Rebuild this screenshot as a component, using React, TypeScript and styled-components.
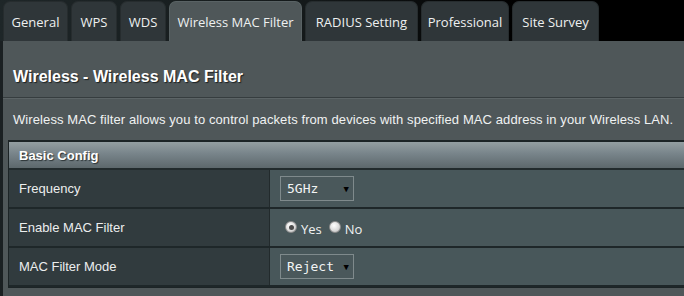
import React from "react";
import styled, { createGlobalStyle } from "styled-components";

const Global = createGlobalStyle`
  html, body { margin: 0; padding: 0; background: #000; overflow: hidden; }
  body { width: 684px; height: 296px; }
`;

const Page = styled.div`
  width: 684px;
  height: 296px;
  display: flex;
  flex-direction: column;
  background: #000;
  overflow: hidden;
`;

const TabBar = styled.div`
  height: 41px;
  display: flex;
  align-items: flex-end;
  gap: 3px;
  padding-left: 3px;
  background: linear-gradient(to right, #1e2628 0%, #14191a 45%, #000 75%);
  flex-shrink: 0;
`;

const Tab = styled.div<{ $w: number; $active?: boolean }>`
  width: ${(p) => p.$w}px;
  height: 40px;
  box-sizing: border-box;
  border-radius: 7px 7px 0 0;
  background: ${(p) => (p.$active ? "#4f5759" : "#2f3639")};
  border: 1px solid ${(p) => (p.$active ? "#596264" : "#262c2e")};
  border-bottom: none;
  display: flex;
  align-items: center;
  justify-content: center;
  font-family: "Open Sans", "DejaVu Sans", sans-serif;
  font-size: 13px;
  color: #eef0f0;
  white-space: nowrap;
  padding-top: 1px;
`;

const Panel = styled.div`
  flex: 1;
  display: flex;
  flex-direction: column;
  background: #4f5759;
  border-left: 3px solid #1a2022;
  margin-right: -20px;
`;

const Title = styled.div`
  height: 56px;
  display: flex;
  align-items: center;
  padding-left: 10px;
  padding-top: 16px;
  box-sizing: border-box;
  font-family: "Liberation Sans", Arial, sans-serif;
  font-weight: bold;
  font-size: 16px;
  color: #ffffff;
  text-shadow: 1px 1px 1px #1b2022;
`;

const Rule = styled.div`
  height: 1px;
  background: #363d3f;
  border-bottom: 1px solid #5c6466;
`;

const Description = styled.div`
  height: 41px;
  display: flex;
  align-items: center;
  padding-left: 10px;
  padding-bottom: 1px;
  box-sizing: border-box;
  font-family: "Liberation Sans", Arial, sans-serif;
  font-size: 13px;
  letter-spacing: 0.09px;
  color: #f0f2f2;
  white-space: nowrap;
`;

const Table = styled.div`
  margin-left: 5px;
  border: 1px solid #1c2426;
  border-right: none;
  border-top: 2px solid #1c2426;
  display: flex;
  flex-direction: column;
`;

const Header = styled.div`
  height: 26px;
  display: flex;
  align-items: center;
  padding-left: 10px;
  background: linear-gradient(to bottom, #949fa2 0%, #78848a 45%, #5d686c 100%);
  border-bottom: 2px solid #222b2d;
  font-family: "Liberation Sans", Arial, sans-serif;
  font-weight: bold;
  font-size: 13px;
  color: #ffffff;
  text-shadow: 1px 1px 1px #2a3234;
`;

const Row = styled.div`
  height: 37px;
  display: grid;
  grid-template-columns: 261px 1fr;
  border-bottom: 2px solid #1e2729;
`;

const Label = styled.div`
  display: flex;
  align-items: center;
  padding-left: 10px;
  background: #313b3e;
  border-right: 1px solid #222a2c;
  font-family: "Liberation Sans", Arial, sans-serif;
  font-size: 13px;
  color: #eceeee;
`;

const Value = styled.div`
  display: flex;
  align-items: center;
  padding-left: 10px;
  background: #48575a;
`;

const Select = styled.div`
  width: 74px;
  height: 25px;
  box-sizing: border-box;
  border: 1px solid #7f8a8c;
  background: #4a585b;
  display: flex;
  align-items: center;
  justify-content: space-between;
  padding: 0 4px 0 6px;
  font-family: "DejaVu Sans Mono", "Liberation Mono", monospace;
  font-size: 13px;
  color: #f2f4f4;
`;

const Arrow = styled.span`
  font-size: 9px;
  color: #000;
  margin-top: 1px;
`;

const RadioGroup = styled.div`
  display: flex;
  align-items: center;
  font-family: "Open Sans", "DejaVu Sans", sans-serif;
  font-size: 13px;
  color: #f0f2f2;
  margin-left: 5px;
  margin-top: 2px;
`;

const Radio = styled.span<{ $checked?: boolean }>`
  width: 12px;
  height: 12px;
  border-radius: 50%;
  box-sizing: border-box;
  background: radial-gradient(circle at 40% 35%, #ffffff 0%, #d8d8d8 60%, #a9a9a9 100%);
  border: 1px solid #8c8c8c;
  display: inline-flex;
  align-items: center;
  justify-content: center;
  margin-right: 4px;
  margin-top: -3px;
  &::after {
    content: "";
    display: ${(p) => (p.$checked ? "block" : "none")};
    width: 5px;
    height: 5px;
    border-radius: 50%;
    background: #4a4a4a;
  }
`;

const RadioText = styled.span`
  margin-right: 7px;
`;

const Footer = styled.div`
  flex: 1;
`;

const tabs: { label: string; w: number; active?: boolean }[] = [
  { label: "General", w: 65 },
  { label: "WPS", w: 46 },
  { label: "WDS", w: 46 },
  { label: "Wireless MAC Filter", w: 133, active: true },
  { label: "RADIUS Setting", w: 113 },
  { label: "Professional", w: 88 },
  { label: "Site Survey", w: 87 },
];

export default function App() {
  return (
    <>
      <Global />
      <Page>
        <TabBar>
          {tabs.map((t) => (
            <Tab key={t.label} $w={t.w} $active={t.active}>
              {t.label}
            </Tab>
          ))}
        </TabBar>
        <Panel>
          <Title>Wireless - Wireless MAC Filter</Title>
          <Rule />
          <Description>
            Wireless MAC filter allows you to control packets from devices with specified MAC address in your Wireless LAN.
          </Description>
          <Table>
            <Header>Basic Config</Header>
            <Row>
              <Label>Frequency</Label>
              <Value>
                <Select>
                  <span>5GHz</span>
                  <Arrow>▼</Arrow>
                </Select>
              </Value>
            </Row>
            <Row>
              <Label>Enable MAC Filter</Label>
              <Value>
                <RadioGroup>
                  <Radio $checked />
                  <RadioText>Yes</RadioText>
                  <Radio />
                  <RadioText>No</RadioText>
                </RadioGroup>
              </Value>
            </Row>
            <Row>
              <Label>MAC Filter Mode</Label>
              <Value>
                <Select>
                  <span>Reject</span>
                  <Arrow>▼</Arrow>
                </Select>
              </Value>
            </Row>
          </Table>
          <Footer />
        </Panel>
      </Page>
    </>
  );
}
